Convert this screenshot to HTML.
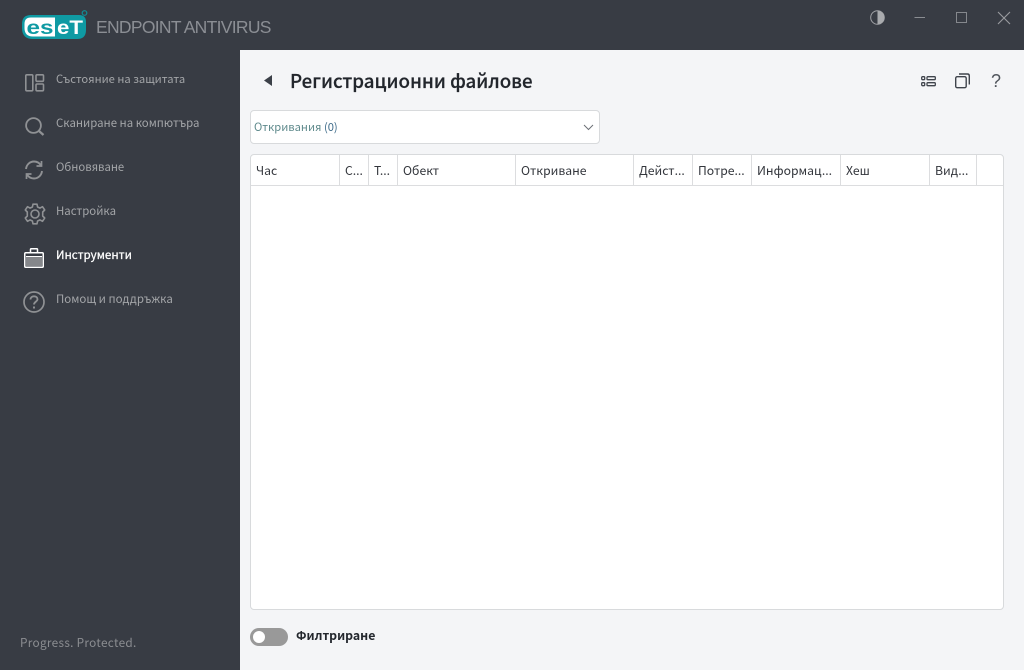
<!DOCTYPE html>
<html><head><meta charset="utf-8">
<style>
html,body{margin:0;padding:0;width:1024px;height:670px;overflow:hidden;background:#383c44;}
body{font-family:"Noto Sans CJK SC","Liberation Sans",sans-serif;position:relative;}
.t{position:absolute;white-space:nowrap;line-height:16px;}
.nav{left:56px;font-size:11.5px;color:#a3a5a8;}
.main{position:absolute;left:240px;top:50px;width:784px;height:620px;background:#f4f5f7;}
.dd{position:absolute;left:250px;top:110px;width:348px;height:32px;background:#fff;border:1px solid #d8dadc;border-radius:4px;}
.tb{position:absolute;left:250px;top:154px;width:752px;height:454px;background:#fff;border:1px solid #d8dadc;border-radius:4px;}
.hl{position:absolute;left:251px;top:185px;width:752px;height:1px;background:#dcdddf;}
.c{position:absolute;top:155px;width:1px;height:30px;background:#dcdddf;}
.h{font-size:12.2px;color:#33363c;top:162px;}
svg{position:absolute;overflow:visible;}
</style></head><body>

<svg style="left:22px;top:14px" width="66" height="26" viewBox="0 0 66 26">
<path d="M9 1H57Q64 1 64 8V16Q64 25 55 25H11Q0 25 0 14V10Q0 1 9 1Z" fill="#0f9aa3"/>
<path d="M9 3.500H33V22.500H11Q2.500 22.500 2.500 14V10Q2.500 3.500 9 3.500Z" fill="#fff"/>
<text x="4.500" y="20" font-family="Liberation Sans" font-weight="700" font-size="19" fill="#0f9aa3" textLength="27" lengthAdjust="spacingAndGlyphs">es</text>
<text x="35" y="20" font-family="Liberation Sans" font-weight="700" font-size="19" fill="#fff" textLength="26" lengthAdjust="spacingAndGlyphs">eT</text>
<circle cx="62.500" cy="-1" r="2.300" fill="none" stroke="#0f8f98" stroke-width="1.200"/>
</svg>
<div class="t" style="left:96px;top:15px;font:17.5px/24px 'Liberation Sans',sans-serif;color:#8b8e94;letter-spacing:-.7px;">ENDPOINT ANTIVIRUS</div>

<svg style="left:25px;top:74px" width="20" height="18" fill="none" stroke="#8f9194" stroke-width="1.600">
<rect x=".8" y=".8" width="7" height="16" rx="1"/><rect x="11" y=".8" width="7.500" height="6.500" rx="1"/><rect x="11" y="10" width="7.500" height="6.800" rx="1"/></svg>
<div class="t nav" style="top:71px;font-size:11.2px">Състояние на защитата</div>

<svg style="left:25px;top:117px" width="20" height="19" fill="none" stroke="#8f9194" stroke-width="1.800">
<circle cx="8.500" cy="8.500" r="7.400"/><path d="M14 14l4.500 4" stroke-width="2.200"/></svg>
<div class="t nav" style="top:115px;font-size:11.4px">Сканиране на компютъра</div>

<svg style="left:25px;top:160px" width="18" height="20" fill="none" stroke="#8f9194" stroke-width="1.900">
<path d="M1 9C1.500 4.500 5 1.500 9 1.500C12 1.500 14.500 3 16 5.500"/><path d="M17 11C16.500 15.500 13 18.500 9 18.500C6 18.500 3.500 17 2 14.500"/>
<path d="M16.500 1V6H11.500" stroke-width="1.700"/><path d="M1.500 19V14H6.500" stroke-width="1.700"/></svg>
<div class="t nav" style="top:159px;font-size:11.3px">Обновяване</div>

<svg style="left:24px;top:203px" width="22" height="22" viewBox="0 0 22 22" fill="none" stroke="#8f9194" stroke-width="1.600">
<path d="M9 1.200H13L13.600 4L16 5.100L18.500 3.700L20.700 7L18.700 9L18.700 13L20.700 15L18.500 18.300L16 16.900L13.600 18L13 20.800H9L8.400 18L6 16.900L3.500 18.300L1.300 15L3.300 13L3.300 9L1.300 7L3.500 3.700L6 5.100L8.400 4Z" stroke-linejoin="round"/>
<circle cx="11" cy="11" r="4"/></svg>
<div class="t nav" style="top:203px;font-size:11.4px">Настройка</div>

<svg style="left:24px;top:248px" width="20" height="20" viewBox="0 0 20 20">
<rect x=".75" y="4.750" width="18.500" height="14.500" rx="1" fill="none" stroke="#fff" stroke-width="1.500"/>
<rect x="2" y="9" width="16" height="9" fill="#85878b"/>
<path d="M2 8.500H18" stroke="#fff" stroke-width="1"/>
<path d="M6.500 5V1.500Q6.500 .75 7.250 .75H12.750Q13.500 .75 13.500 1.500V5" fill="none" stroke="#fff" stroke-width="1.500"/></svg>
<div class="t nav" style="top:247px;color:#fff;font-size:11.6px;-webkit-text-stroke:.25px #fff">Инструменти</div>

<svg style="left:23px;top:291px" width="22" height="22" fill="none" stroke="#8f9194" stroke-width="1.700">
<circle cx="11" cy="11" r="10"/><path d="M7.500 8.500C7.500 6.500 9 5.300 11 5.300C13 5.300 14.500 6.500 14.500 8.300C14.500 10.500 11 10.800 11 13.500" stroke-width="1.800"/><path d="M11 15.500V17.500" stroke-width="2"/></svg>
<div class="t nav" style="top:291px;font-size:11.5px">Помощ и поддръжка</div>

<div class="t" style="left:20px;top:635px;font-size:11.8px;color:#8b8d91;letter-spacing:.3px">Progress. Protected.</div>

<svg style="left:870px;top:10px" width="15" height="15"><circle cx="7.500" cy="7.500" r="6.800" fill="none" stroke="#a0a2a6" stroke-width="1"/><path d="M7.500 .7A6.800 6.800 0 0 1 7.500 14.300Z" fill="#a9abae"/></svg>
<svg style="left:914px;top:17px" width="12" height="2"><path d="M.5 .5H11" stroke="#8a8d92" stroke-width="1"/></svg>
<svg style="left:956px;top:12px" width="12" height="12"><rect x=".5" y=".5" width="10" height="10" fill="none" stroke="#85888d" stroke-width="1"/></svg>
<svg style="left:997px;top:11px" width="14" height="14"><path d="M1 1L13 13M13 1L1 13" stroke="#9a9ca0" stroke-width="1.100"/></svg>

<div class="main"></div>

<svg style="left:263px;top:75px" width="9" height="11"><path d="M9 0V11L1 5.500Z" fill="#3b4048"/></svg>
<div class="t" style="left:290px;top:68px;font-size:18.7px;line-height:26px;font-weight:500;color:#22262c;-webkit-text-stroke:.2px #22262c">Регистрационни файлове</div>

<svg style="left:921px;top:76px" width="15" height="11" fill="none" stroke="#3f444c" stroke-width="1.300">
<rect x=".7" y=".7" width="3" height="3" rx=".8"/><rect x=".7" y="6.700" width="3" height="3" rx=".8"/><rect x="6" y=".7" width="8.300" height="3" rx=".8"/><rect x="6" y="6.700" width="8.300" height="3" rx=".8"/></svg>
<svg style="left:955px;top:73px" width="15" height="16" fill="none" stroke="#3f444c" stroke-width="1.400">
<rect x=".7" y="3.700" width="10.500" height="11" rx="1.500"/><path d="M4 1H12.500Q14.300 1 14.300 3V11.500"/></svg>
<div class="t" style="left:991px;top:70px;font:18px/22px 'Liberation Sans',sans-serif;color:#50555c;">?</div>

<div class="dd"></div>
<div class="t" style="left:254px;top:119px;font-size:11.2px;color:#5f8a8c;">Откривания <span style="color:#3f6c8a">(0)</span></div>
<svg style="left:583px;top:124px" width="11" height="7"><path d="M1 1L5.500 5.500L10 1" fill="none" stroke="#6c7076" stroke-width="1"/></svg>

<div class="tb"></div>
<div class="hl"></div>
<div class="c" style="left:339px"></div>
<div class="c" style="left:368px"></div>
<div class="c" style="left:397px"></div>
<div class="c" style="left:515px"></div>
<div class="c" style="left:633px"></div>
<div class="c" style="left:692px"></div>
<div class="c" style="left:751px"></div>
<div class="c" style="left:840px"></div>
<div class="c" style="left:929px"></div>
<div class="c" style="left:976px"></div>
<div class="t h" style="left:256px">Час</div>
<div class="t h" style="left:345px">С...</div>
<div class="t h" style="left:374px">Т...</div>
<div class="t h" style="left:403px">Обект</div>
<div class="t h" style="left:521px">Откриване</div>
<div class="t h" style="left:639px">Дейст...</div>
<div class="t h" style="left:698px">Потре...</div>
<div class="t h" style="left:757px">Информац...</div>
<div class="t h" style="left:846px">Хеш</div>
<div class="t h" style="left:935px">Вид...</div>

<div style="position:absolute;left:250px;top:628px;width:38px;height:18px;border-radius:9px;background:#999;"></div>
<div style="position:absolute;left:253px;top:631px;width:12px;height:12px;border-radius:50%;background:#fff;"></div>
<div class="t" style="left:296px;top:627px;font-size:12.3px;font-weight:700;color:#23272d;">Филтриране</div>
</body></html>
